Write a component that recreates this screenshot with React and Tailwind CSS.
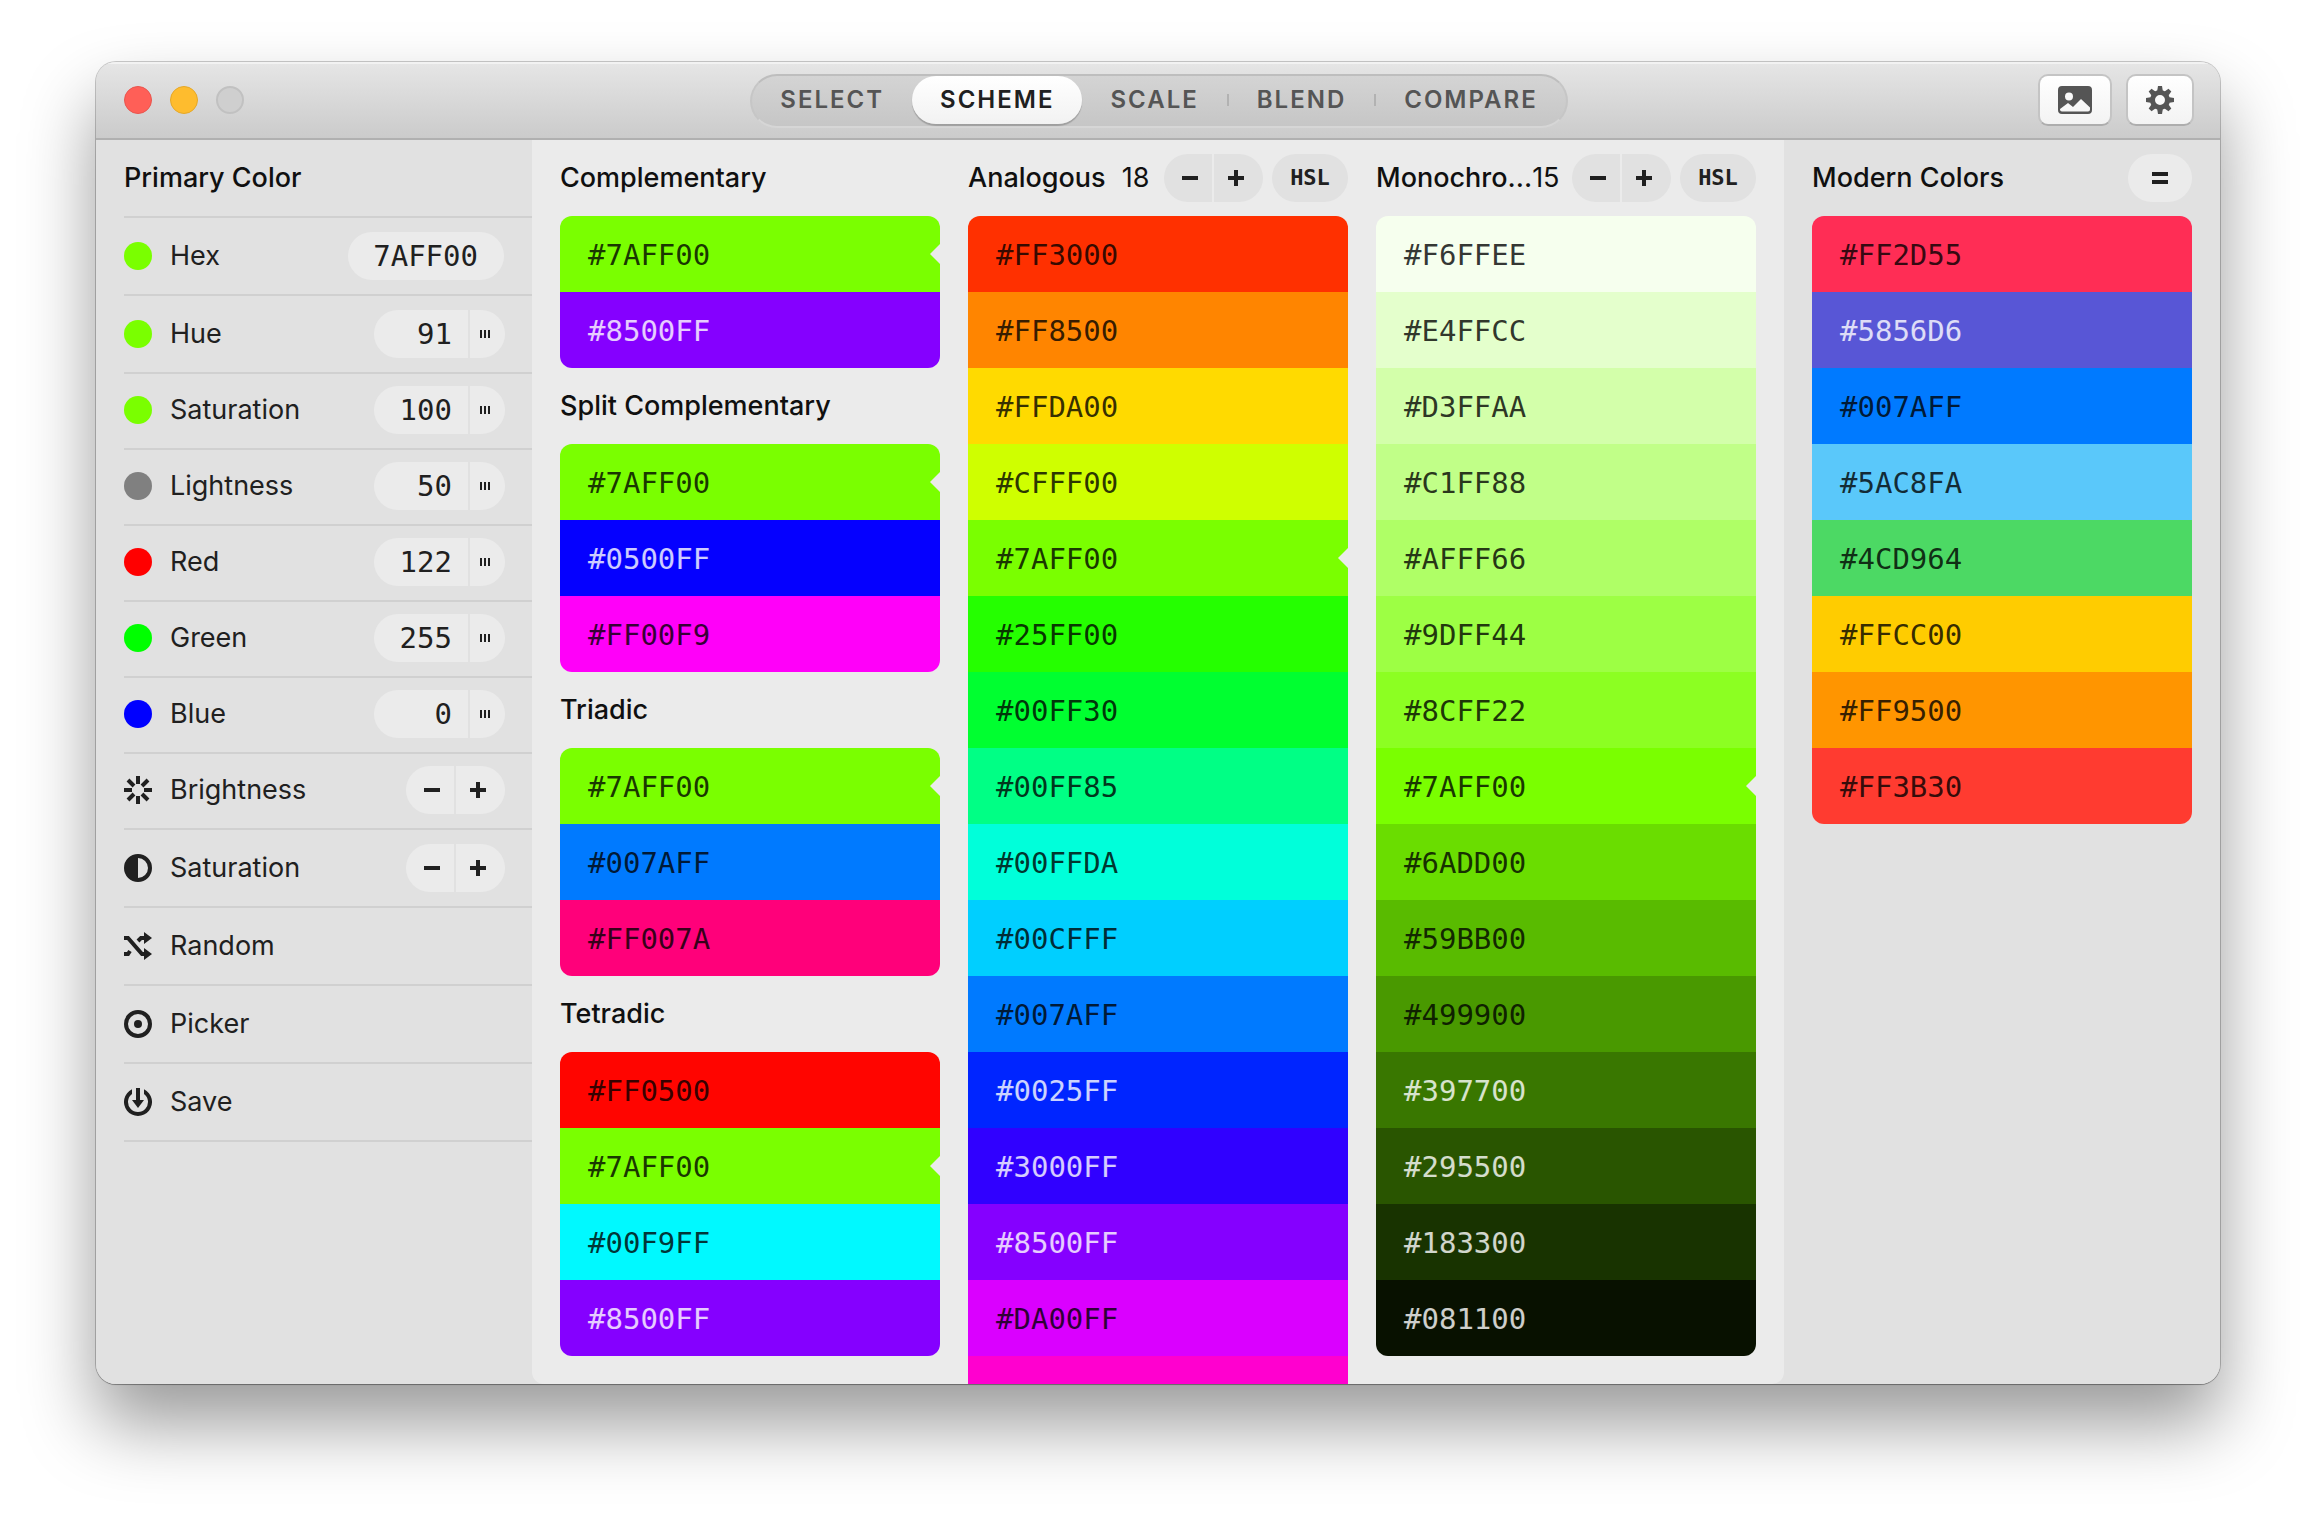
import React from 'react';

const ICONS = {
  brightness: (
    <g stroke="currentColor" strokeWidth="4">
      <path d="M14 0v8M14 20v8M0 14h8M20 14h8" />
      <path d="M4 4l6 6M18 18l6 6M24 4l-6 6M10 18l-6 6" />
    </g>
  ),
  contrast: (
    <g>
      <circle cx="14" cy="14" r="12" fill="none" stroke="currentColor" strokeWidth="4" />
      <path d="M14 1a13 13 0 0 0 0 26z" fill="currentColor" />
    </g>
  ),
  shuffle: (
    <g>
      <path d="M0 6h4l14 16h4M0 22h4l2-3M14 9l3-3h5" fill="none" stroke="currentColor" strokeWidth="4" />
      <path d="M20 0l8 6-8 6zM20 16l8 6-8 6z" fill="currentColor" />
    </g>
  ),
  picker: (
    <g>
      <circle cx="14" cy="14" r="12" fill="none" stroke="currentColor" strokeWidth="4" />
      <circle cx="14" cy="14" r="4" fill="currentColor" />
    </g>
  ),
  save: (
    <g fill="currentColor">
      <path d="M8 1.350A14 14 0 1 0 20 1.350V6A10 10 0 1 1 8 6z" />
      <path d="M12 0h4v12h4l-6 8-6-8h4z" />
    </g>
  ),
};

const Icon = ({ name }) => (
  <svg width="28" height="28" viewBox="0 0 28 28" className="shrink-0" aria-hidden="true">
    {ICONS[name]}
  </svg>
);

const Minus = () => (
  <svg width="16" height="16" viewBox="0 0 16 16" fill="currentColor" aria-hidden="true">
    <path d="M0 6h16v4H0z" />
  </svg>
);

const Plus = () => (
  <svg width="16" height="16" viewBox="0 0 16 16" fill="currentColor" aria-hidden="true">
    <path d="M6 0h4v6h6v4h-6v6H6v-6H0V6h6z" />
  </svg>
);

const channels = [
  { label: 'Hue', value: '91', dot: 'bg-[#7aff00]', height: 'h-[78px]' },
  { label: 'Saturation', value: '100', dot: 'bg-[#7aff00]', height: 'h-[76px] pb-0.5' },
  { label: 'Lightness', value: '50', dot: 'bg-[#808080]', height: 'h-[76px] pb-0.5' },
  { label: 'Red', value: '122', dot: 'bg-[#ff0000]', height: 'h-[76px] pb-0.5' },
  { label: 'Green', value: '255', dot: 'bg-[#00ff00]', height: 'h-[76px] pb-0.5' },
  { label: 'Blue', value: '0', dot: 'bg-[#0000ff]', height: 'h-[76px] pb-0.5' },
];

const actions = [
  { label: 'Random', icon: 'shuffle' },
  { label: 'Picker', icon: 'picker' },
  { label: 'Save', icon: 'save' },
];

const schemes = [
  { title: 'Complementary', colors: ['7AFF00', '8500FF'] },
  { title: 'Split Complementary', colors: ['7AFF00', '0500FF', 'FF00F9'] },
  { title: 'Triadic', colors: ['7AFF00', '007AFF', 'FF007A'] },
  { title: 'Tetradic', colors: ['FF0500', '7AFF00', '00F9FF', '8500FF'] },
];

const analogous = [
  'FF3000', 'FF8500', 'FFDA00', 'CFFF00', '7AFF00', '25FF00', '00FF30', '00FF85',
  '00FFDA', '00CFFF', '007AFF', '0025FF', '3000FF', '8500FF', 'DA00FF',
];

const monochromatic = [
  'F6FFEE', 'E4FFCC', 'D3FFAA', 'C1FF88', 'AFFF66', '9DFF44', '8CFF22', '7AFF00',
  '6ADD00', '59BB00', '499900', '397700', '295500', '183300', '081100',
];

const modern = ['FF2D55', '5856D6', '007AFF', '5AC8FA', '4CD964', 'FFCC00', 'FF9500', 'FF3B30'];

const lightText = ['8500FF', '0500FF', '0025FF', '3000FF', '397700', '295500', '183300', '081100', '5856D6'];

const Swatches = ({ colors, current, more }) => (
  <ul className={`overflow-hidden ${more ? 'rounded-t-xl' : 'rounded-xl'}`}>
    {colors.map((hex) => (
      <li key={hex} className="relative" style={{ backgroundColor: `#${hex}` }}>
        <button
          type="button"
          className={`block w-full h-[76px] px-7 pt-0.5 text-left font-['DejaVu_Sans_Mono',monospace] text-[29px] ${
            lightText.includes(hex) ? 'text-white/80' : 'text-black/80'
          }`}
        >
          #{hex}
        </button>
        {hex === current && (
          <svg width="10" height="20" viewBox="0 0 10 20" className="absolute right-0 top-7 text-[#ebebeb]" aria-hidden="true">
            <path d="M10 0v20L0 10z" fill="currentColor" />
          </svg>
        )}
      </li>
    ))}
    {more && <li className="h-7" style={{ backgroundColor: `#${more}` }} />}
  </ul>
);

const Stepper = ({ label, tone }) => (
  <div className="flex gap-[2px] shrink-0">
    <button type="button" aria-label={`Decrease ${label}`} className={`w-12 h-12 pl-1 rounded-l-full flex items-center justify-center ${tone}`}>
      <Minus />
    </button>
    <button type="button" aria-label={`Increase ${label}`} className={`w-[49px] h-12 pr-[5px] rounded-r-full flex items-center justify-center ${tone}`}>
      <Plus />
    </button>
  </div>
);

const Heading = ({ children }) => <h2 className="font-medium text-[#101010] whitespace-nowrap">{children}</h2>;

const CountedColumn = ({ title, count, colors, gap, more }) => (
  <section className="flex-1 min-w-0">
    <div className="h-[76px] flex items-center justify-between">
      <div className={`flex ${gap}`}>
        <Heading>{title}</Heading>
        <span className="text-[#101010]">{count}</span>
      </div>
      <div className="flex gap-[9px] shrink-0">
        <Stepper label={title} tone="bg-[#e1e1e1]" />
        <button type="button" className="w-[76px] h-12 rounded-full bg-[#e1e1e1] font-['DejaVu_Sans_Mono',monospace] text-[22px] font-bold">
          HSL
        </button>
      </div>
    </div>
    <Swatches colors={colors} current="7AFF00" more={more} />
  </section>
);

const Tab = ({ children, active }) => (
  <button
    type="button"
    className={`h-12 px-7 rounded-full text-2xl tracking-[2px] font-semibold ${
      active
        ? 'bg-linear-to-b from-white to-[#f2f2f2] text-[#202020] shadow-[0_2px_1px_rgba(0,0,0,0.2)]'
        : 'text-[#555]'
    }`}
  >
    {children}
  </button>
);

const TabDivider = () => <span className="w-[2px] h-3 bg-[#b2b2b2]" />;

const TitleBar = () => (
  <header className="h-[78px] pl-7 pr-[26px] flex items-center bg-linear-to-b from-[#e6e6e6] to-[#cbcbcb] border-b-2 border-[#b0b0b0] shadow-[inset_0_2px_0_#f2f2f2]">
    <div className="flex-1 flex gap-[18px]">
      <button type="button" aria-label="Close" className="w-7 h-7 rounded-full bg-[#ff5f57] border border-[#e9554e]" />
      <button type="button" aria-label="Minimize" className="w-7 h-7 rounded-full bg-[#febc2e] border border-[#e5a829]" />
      <button type="button" aria-label="Zoom" className="w-7 h-7 rounded-full bg-[#cfcfcf] border-2 border-[#c1c1c1]" />
    </div>
    <nav className="mt-0.5 pb-0.5 flex items-center rounded-full bg-linear-to-b from-[#d4d4d4] to-[#c6c6c6] border-2 border-t-[#bebebe] border-x-[#c6c6c6] border-b-[#d6d6d6]">
      <Tab>SELECT</Tab>
      <Tab active>SCHEME</Tab>
      <Tab>SCALE</Tab>
      <TabDivider />
      <Tab>BLEND</Tab>
      <TabDivider />
      <Tab>COMPARE</Tab>
    </nav>
    <div className="flex-1 flex justify-end gap-[14px] text-[#555]">
      <button type="button" aria-label="Image" className="w-[74px] h-[52px] rounded-[10px] flex items-center justify-center bg-linear-to-b from-white to-[#f3f3f3] border-2 border-[#c4c4c4] border-b-[#adadad]">
        <svg width="34" height="28" viewBox="0 0 34 28" aria-hidden="true">
          <path
            fill="currentColor"
            fillRule="evenodd"
            d="M4 0h26a4 4 0 0 1 4 4v20a4 4 0 0 1-4 4H4a4 4 0 0 1-4-4V4a4 4 0 0 1 4-4zM11 6.500a4 4 0 1 0 0 8 4 4 0 0 0 0-8zM2 23.500a2 2 0 0 0 2 2h26a2 2 0 0 0 2-2v-2L23 13l-8 8-5-4-8 6z"
          />
        </svg>
      </button>
      <button type="button" aria-label="Settings" className="w-[68px] h-[52px] rounded-[10px] flex items-center justify-center bg-linear-to-b from-white to-[#f3f3f3] border-2 border-[#c4c4c4] border-b-[#adadad]">
        <svg width="28" height="28" viewBox="0 0 28 28" aria-hidden="true">
          <circle cx="14" cy="14" r="7.500" fill="none" stroke="currentColor" strokeWidth="5" />
          <g fill="currentColor">
            {[0, 45, 90, 135, 180, 225, 270, 315].map((angle) => (
              <path key={angle} d="M12 0h4l1 6h-6z" transform={`rotate(${angle} 14 14)`} />
            ))}
          </g>
        </svg>
      </button>
    </div>
  </header>
);

const Sidebar = () => (
  <aside className="w-[436px] shrink-0 pl-7 bg-[#e1e1e1]">
    <div className="h-[78px] flex items-center border-b-2 border-[#d0d0d0]">
      <Heading>Primary Color</Heading>
    </div>
    <div className="h-[78px] pr-7 flex items-center border-b-2 border-[#d0d0d0]">
      <span className="w-7 h-7 rounded-full bg-[#7aff00]" />
      <label htmlFor="hex" className="flex-1 pl-[18px]">Hex</label>
      <input
        id="hex"
        defaultValue="7AFF00"
        className="w-[156px] h-12 pl-4 pr-[26px] rounded-full bg-[#ebebeb] text-right font-['DejaVu_Sans_Mono',monospace] text-[29px] outline-none"
      />
    </div>
    {channels.map(({ label, value, dot, height }) => (
      <div key={label} className={`${height} pr-[27px] flex items-center border-b-2 border-[#d0d0d0]`}>
        <span className={`w-7 h-7 rounded-full ${dot}`} />
        <label htmlFor={label} className="flex-1 pl-[18px]">{label}</label>
        <input
          id={label}
          defaultValue={value}
          className="w-[94px] h-12 pr-4 rounded-l-full bg-[#ebebeb] text-right font-['DejaVu_Sans_Mono',monospace] text-[29px] outline-none"
        />
        <button type="button" aria-label={`Drag ${label}`} className="w-[35px] h-12 ml-[2px] pr-[5px] rounded-r-full bg-[#ebebeb] flex items-center justify-center gap-[2px]">
          <span className="w-[2px] h-2 bg-[#202020]" />
          <span className="w-[2px] h-2 bg-[#202020]" />
          <span className="w-[2px] h-2 bg-[#202020]" />
        </button>
      </div>
    ))}
    <div className="h-[76px] pb-0.5 pr-[27px] flex items-center border-b-2 border-[#d0d0d0]">
      <Icon name="brightness" />
      <span className="flex-1 pl-[18px]">Brightness</span>
      <Stepper label="brightness" tone="bg-[#ebebeb]" />
    </div>
    <div className="h-[78px] pr-[27px] flex items-center border-b-2 border-[#d0d0d0]">
      <Icon name="contrast" />
      <span className="flex-1 pl-[18px]">Saturation</span>
      <Stepper label="saturation" tone="bg-[#ebebeb]" />
    </div>
    {actions.map(({ label, icon }) => (
      <button key={label} type="button" className="w-full h-[78px] flex items-center border-b-2 border-[#d0d0d0]">
        <Icon name={icon} />
        <span className="pl-[18px]">{label}</span>
      </button>
    ))}
  </aside>
);

export default function App() {
  return (
    <div className="h-screen bg-white px-24 pt-[62px] pb-[134px] font-[Inter,sans-serif] text-[27px] leading-[42px] text-[#202020]">
      <div className="h-full flex flex-col rounded-[20px] overflow-hidden bg-[#e1e1e1] shadow-[0_0_0_1px_rgba(0,0,0,0.2),0_1px_1px_rgba(0,0,0,0.2),0_40px_72px_rgba(0,0,0,0.4)]">
        <TitleBar />
        <div className="flex-1 min-h-0 flex">
          <Sidebar />
          <main className="flex-1 min-w-0 px-7 flex gap-7 overflow-hidden rounded-b-xl bg-[#ebebeb]">
            <div className="flex-1 min-w-0">
              {schemes.map(({ title, colors }) => (
                <section key={title}>
                  <div className="h-[76px] flex items-center">
                    <Heading>{title}</Heading>
                  </div>
                  <Swatches colors={colors} current="7AFF00" />
                </section>
              ))}
            </div>
            <CountedColumn title="Analogous" count="18" colors={analogous} gap="gap-4" more="FF00CF" />
            <CountedColumn title="Monochro..." count="15" colors={monochromatic} gap="gap-0" />
          </main>
          <aside className="w-[436px] shrink-0 px-7 bg-[#e1e1e1]">
            <div className="h-[76px] flex items-center justify-between">
              <Heading>Modern Colors</Heading>
              <button type="button" aria-label="Menu" className="w-16 h-12 rounded-full flex items-center justify-center bg-[#ebebeb]">
                <svg width="16" height="12" viewBox="0 0 16 12" fill="currentColor" aria-hidden="true">
                  <path d="M0 0h16v4H0zM0 8h16v4H0z" />
                </svg>
              </button>
            </div>
            <Swatches colors={modern} />
          </aside>
        </div>
      </div>
    </div>
  );
}
